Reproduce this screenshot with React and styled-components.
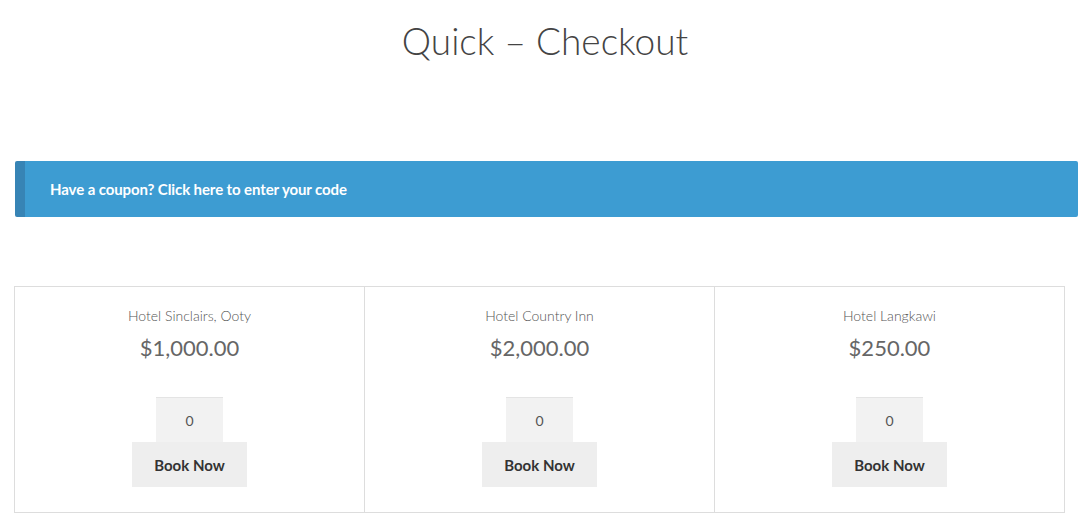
import React from "react";
import styled, { createGlobalStyle } from "styled-components";

const Global = createGlobalStyle`
  html, body {
    margin: 0;
    padding: 0;
    background: #fff;
    font-family: "Lato", "Open Sans", sans-serif;
    color: #555;
  }
`;

const Page = styled.div`
  width: 1090px;
  padding-top: 16px;
`;

const Title = styled.h1`
  margin: 0;
  text-align: center;
  font-family: "Lato", sans-serif;
  font-weight: 300;
  font-size: 37px;
  line-height: 50px;
  color: #444;
`;

const Notice = styled.div`
  margin: 95px 12px 0 15px;
  height: 56px;
  display: flex;
  align-items: center;
  padding-left: 25px;
  background: #3d9cd2;
  border-left: 10px solid #3784b5;
  border-radius: 2px;
  box-sizing: border-box;
  color: #fff;
  font-size: 15px;
  font-weight: 700;
  letter-spacing: -0.1px;
`;

const Grid = styled.div`
  margin: 69px 0 0 14px;
  width: 1051px;
  display: grid;
  grid-template-columns: 349px 350px 350px;
  border: 1px solid #ddd;
  box-sizing: border-box;
`;

const Cell = styled.div`
  height: 225px;
  display: flex;
  flex-direction: column;
  align-items: center;
  padding-top: 19px;
  box-sizing: border-box;
  border-left: ${({ $first }) => ($first ? "none" : "1px solid #ddd")};
`;

const Name = styled.div`
  font-size: 14px;
  font-weight: 300;
  color: #555;
  line-height: 20px;
`;

const Price = styled.div`
  margin-top: 7px;
  font-size: 22px;
  color: #666;
  line-height: 30px;
`;

const Qty = styled.div`
  margin-top: 34px;
  width: 67px;
  height: 45px;
  background: #f2f2f2;
  border-top: 1px solid #e4e4e4;
  box-sizing: border-box;
  display: flex;
  align-items: center;
  justify-content: center;
  font-size: 14px;
  color: #555;
`;

const Button = styled.button`
  width: 115px;
  height: 45px;
  border: none;
  background: #eeeeee;
  font-family: "Lato", sans-serif;
  font-size: 15px;
  font-weight: 700;
  color: #333;
  cursor: pointer;
`;

const hotels = [
  { name: "Hotel Sinclairs, Ooty", price: "$1,000.00" },
  { name: "Hotel Country Inn", price: "$2,000.00" },
  { name: "Hotel Langkawi", price: "$250.00" },
];

export default function App() {
  return (
    <Page>
      <Global />
      <Title>Quick – Checkout</Title>
      <Notice>Have a coupon? Click here to enter your code</Notice>
      <Grid>
        {hotels.map((h, i) => (
          <Cell key={h.name} $first={i === 0}>
            <Name>{h.name}</Name>
            <Price>{h.price}</Price>
            <Qty>0</Qty>
            <Button>Book Now</Button>
          </Cell>
        ))}
      </Grid>
    </Page>
  );
}
